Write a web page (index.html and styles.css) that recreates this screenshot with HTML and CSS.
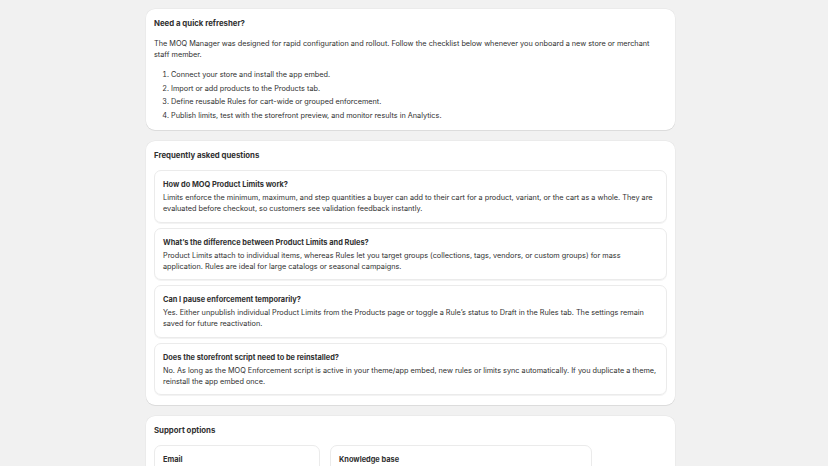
FILE: index.html
```html
<!DOCTYPE html>
<html lang="en">
<head>
<meta charset="utf-8">
<title>Help &amp; support</title>
<link rel="stylesheet" href="styles.css">
</head>
<body>
<main class="page">
  <section class="card">
    <h2 class="card-title">Need a quick refresher?</h2>
    <p class="body-text intro">The MOQ Manager was designed for rapid configuration and rollout. Follow the checklist below whenever you onboard a new store or merchant staff member.</p>
    <ol class="steps">
      <li>Connect your store and install the app embed.</li>
      <li>Import or add products to the Products tab.</li>
      <li>Define reusable Rules for cart-wide or grouped enforcement.</li>
      <li>Publish limits, test with the storefront preview, and monitor results in Analytics.</li>
    </ol>
  </section>

  <section class="card">
    <h2 class="card-title">Frequently asked questions</h2>
    <div class="faq-list">
      <div class="faq">
        <h3 class="faq-q">How do MOQ Product Limits work?</h3>
        <p class="body-text">Limits enforce the minimum, maximum, and step quantities a buyer can add to their cart for a product, variant, or the cart as a whole. They are evaluated before checkout, so customers see validation feedback instantly.</p>
      </div>
      <div class="faq">
        <h3 class="faq-q">What’s the difference between Product Limits and Rules?</h3>
        <p class="body-text">Product Limits attach to individual items, whereas Rules let you target groups (collections, tags, vendors, or custom groups) for mass application. Rules are ideal for large catalogs or seasonal campaigns.</p>
      </div>
      <div class="faq">
        <h3 class="faq-q">Can I pause enforcement temporarily?</h3>
        <p class="body-text">Yes. Either unpublish individual Product Limits from the Products page or toggle a Rule’s status to Draft in the Rules tab. The settings remain saved for future reactivation.</p>
      </div>
      <div class="faq">
        <h3 class="faq-q">Does the storefront script need to be reinstalled?</h3>
        <p class="body-text">No. As long as the MOQ Enforcement script is active in your theme/app embed, new rules or limits sync automatically. If you duplicate a theme, reinstall the app embed once.</p>
      </div>
    </div>
  </section>

  <section class="card">
    <h2 class="card-title">Support options</h2>
    <div class="support-row">
      <div class="support support-email">
        <h3 class="faq-q">Email</h3>
      </div>
      <div class="support support-kb">
        <h3 class="faq-q">Knowledge base</h3>
      </div>
    </div>
  </section>
</main>
</body>
</html>
```

FILE: styles.css
```css
* {
  box-sizing: border-box;
}

html,
body {
  margin: 0;
  padding: 0;
  background: #f1f1f1;
  color: #303030;
  font-family: Inter, "Noto Sans", "Liberation Sans", sans-serif;
  font-size: 7.3px;
  line-height: 11px;
}

.page {
  width: 529px;
  margin-left: 146px;
  padding-top: 9px;
  display: flex;
  flex-direction: column;
  gap: 11px;
}

.card {
  background: #ffffff;
  border-radius: 9px;
  padding: 8px 8px 9.5px 8px;
  box-shadow: 0 1px 0 rgba(26, 26, 26, 0.07), 0 0 0 0.5px rgba(0, 0, 0, 0.05);
}

.card-title {
  margin: 0 0 9px;
  font-size: 7.8px;
  line-height: 12px;
  font-weight: 650;
}

.body-text {
  margin: 0;
}

.intro {
  max-width: 505px;
}

.steps {
  margin: 9px 0 0;
  padding-left: 17px;
  display: flex;
  flex-direction: column;
  gap: 2.5px;
}

.faq-list {
  display: flex;
  flex-direction: column;
  gap: 5px;
}

.faq {
  border: 1px solid #ebebeb;
  border-radius: 7px;
  padding: 8px 8px 7.5px 8px;
  box-shadow: 0 1px 0 rgba(26, 26, 26, 0.05);
}

.faq-q {
  margin: 0 0 2px;
  font-size: 7.4px;
  line-height: 11px;
  font-weight: 650;
}

.support-row {
  display: flex;
  gap: 10px;
}

.support {
  border: 1px solid #ebebeb;
  border-radius: 7px;
  padding: 8px;
  height: 60px;
}

.support-email {
  width: 166px;
}

.support-kb {
  width: 262px;
}
```
